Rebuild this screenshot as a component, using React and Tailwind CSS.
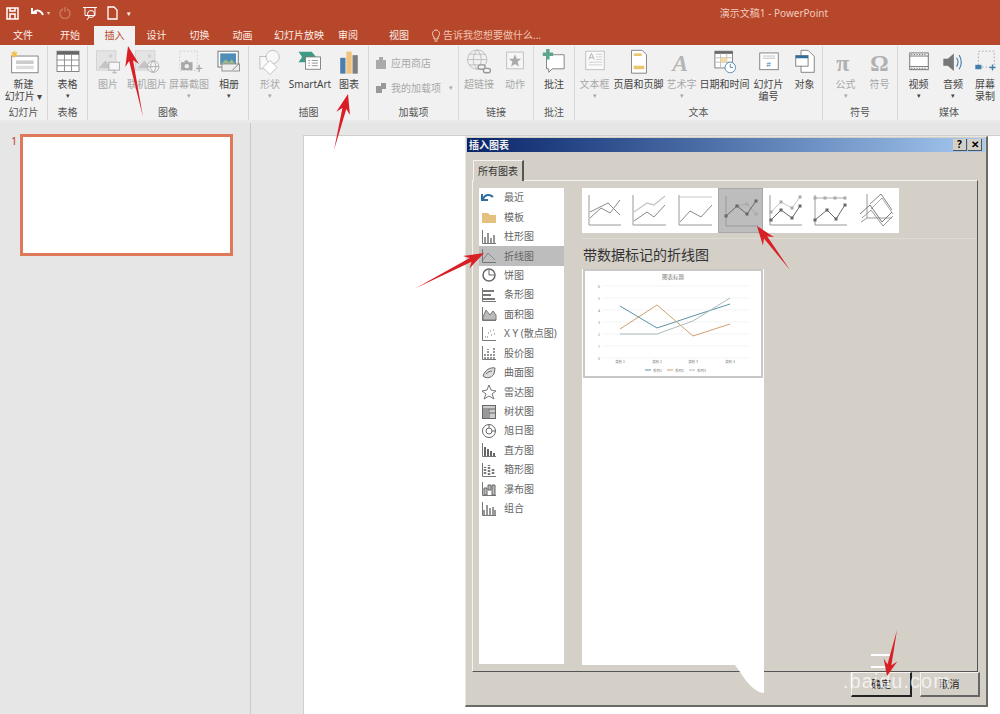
import React from 'react'

const FONT = "font-['Noto_Sans','Noto_Sans_CJK_SC',sans-serif]"

const TABS = [
  ['文件', 'w-[46px]'],
  ['开始', 'w-[48px]'],
  ['插入', 'w-[41px]', true],
  ['设计', 'w-[43px]'],
  ['切换', 'w-[43px]'],
  ['动画', 'w-[43px]'],
  ['幻灯片放映', 'w-[70px]'],
  ['审阅', 'w-[28px]'],
  ['视图', 'w-[38px] ml-[18px]'],
]

const Svg = ({ children, w = 30, h = 30, box }) => (
  <svg width={w} height={h} viewBox={box || `0 0 ${w} ${h}`} fill="none">{children}</svg>
)

const icons = {
  newSlide: (
    <Svg w={36}>
      <rect x="4" y="8" width="30" height="19" fill="#fff" stroke="#777" />
      <rect x="9" y="13" width="20" height="4" fill="#ccc" />
      <rect x="9" y="19" width="20" height="4" fill="#ddd" />
      <path d="M7 1l1 3 3-1-2 3 3 2-4 0-1 3-1-3-4 0 3-2-2-3 3 1z" fill="#f0c050" />
    </Svg>
  ),
  table: (
    <Svg w={28}>
      <rect x="1.500" y="2.500" width="25" height="23" fill="#fff" stroke="#777" />
      <rect x="1.500" y="2.500" width="25" height="4" fill="#666" />
      <path d="M1.500 12.500h25M1.500 19h25M10 6v20M18 6v20" stroke="#888" />
    </Svg>
  ),
  picture: (
    <Svg w={28}>
      <rect x="1" y="2" width="22" height="22" fill="#e4e4e4" stroke="#d0d0d0" />
      <path d="M3 22l8-9 7 9z" fill="#c4c4c4" />
      <circle cx="17" cy="8" r="2" fill="#cfcfcf" />
      <rect x="15" y="15" width="12" height="9" fill="#f6f6f6" stroke="#a8a8a8" />
      <path d="M19 27h5M21 24v3" stroke="#a8a8a8" />
    </Svg>
  ),
  online: (
    <Svg w={30}>
      <rect x="2" y="2" width="22" height="22" fill="#e4e4e4" stroke="#d0d0d0" />
      <path d="M4 22l8-9 7 9z" fill="#c4c4c4" />
      <circle cx="18" cy="8" r="2" fill="#cfcfcf" />
      <circle cx="22" cy="20" r="6.5" fill="#f4f4f4" stroke="#aaa" />
      <path d="M15.5 20h13M22 13.5c-4 4-4 9 0 13M22 13.5c4 4 4 9 0 13" stroke="#aaa" />
    </Svg>
  ),
  screenshot: (
    <Svg w={32}>
      <rect x="5.5" y="2.5" width="20" height="22" stroke="#ccc" strokeDasharray="2 2" />
      <rect x="7" y="15" width="13" height="9" fill="#a8a8a8" />
      <rect x="11" y="13" width="4" height="3" fill="#a8a8a8" />
      <circle cx="13.5" cy="19.5" r="2.5" fill="#eee" />
      <path d="M24 22h7M27.5 18v8" stroke="#aaa" strokeWidth="1.5" />
    </Svg>
  ),
  album: (
    <Svg w={28}>
      <rect x="1.5" y="2.5" width="23" height="18" fill="#fff" stroke="#666" />
      <rect x="4" y="5" width="18" height="13" fill="#4f8fb5" />
      <path d="M4 18l6-6 4 3 3-3 5 6z" fill="#9db98c" />
      <rect x="6" y="17" width="20" height="8" fill="#eee" stroke="#888" />
      <path d="M18 24l7-7" stroke="#777" />
    </Svg>
  ),
  shapes: (
    <Svg w={26}>
      <rect x="1.5" y="8.5" width="14" height="14" stroke="#bbb" fill="#f8f8f8" />
      <circle cx="16" cy="9" r="7.5" stroke="#bbb" fill="#f8f8f8" />
      <path d="M13 13l8 8-8 8-8-8z" stroke="#bbb" fill="#fff" />
    </Svg>
  ),
  smartart: (
    <Svg w={28}>
      <path d="M1 3h15l5 6-5 6H1l4-6z" fill="#3f9a86" />
      <rect x="9" y="9" width="17" height="14" fill="#fff" stroke="#777" />
      <path d="M12 13h2M16 13h7M12 16h2M16 16h7M12 19h2M16 19h7" stroke="#888" />
    </Svg>
  ),
  chart: (
    <Svg w={22}>
      <rect x="1" y="10" width="6" height="18" fill="#4d7fae" />
      <rect x="8" y="3" width="6" height="25" fill="#f0c27a" />
      <rect x="15" y="7" width="6" height="21" fill="#7f7f7f" />
    </Svg>
  ),
  hyperlink: (
    <Svg w={30}>
      <circle cx="13" cy="12" r="11" stroke="#bbb" />
      <path d="M2 12h22M13 1c-6 6-6 16 0 22M13 1c6 6 6 16 0 22M4 6h18M4 18h18" stroke="#bbb" />
      <rect x="14" y="18" width="8" height="5" rx="2.5" stroke="#999" strokeWidth="1.5" fill="#f1f1f1" />
      <rect x="20" y="22" width="8" height="5" rx="2.5" stroke="#999" strokeWidth="1.5" fill="#f1f1f1" />
    </Svg>
  ),
  action: (
    <Svg w={24}>
      <rect x="2.5" y="3.5" width="19" height="19" stroke="#bbb" fill="#f6f6f6" />
      <path d="M12 6l2 5h5l-4 3.5 1.5 5.5-4.500-3-4.500 3L9 14.500 5 11h5z" fill="#aaa" />
    </Svg>
  ),
  comment: (
    <Svg w={26}>
      <path d="M4.500 6.500h20v16H11l-4 4v-4H4.500z" fill="#fff" stroke="#777" />
      <path d="M4 0h4v4h4v4H8v4H4V8H0V4h4z" fill="#5ea58f" />
    </Svg>
  ),
  textbox: (
    <Svg w={26}>
      <rect x="2.500" y="2.500" width="21" height="21" fill="#fafafa" stroke="#bbb" />
      <path d="M6 12l3-7 3 7M7 10h4" stroke="#aaa" />
      <path d="M14 6h7M14 9h7M14 12h7M6 15h15M6 18h15" stroke="#ccc" />
    </Svg>
  ),
  header: (
    <Svg w={20}>
      <path d="M1.500 1.500h12l5 5v21h-17z" fill="#fff" stroke="#777" />
      <rect x="4" y="5" width="9" height="3" fill="#e8c66e" />
      <rect x="4" y="19" width="12" height="4" fill="#e8c66e" />
    </Svg>
  ),
  wordart: (
    <Svg w={26}>
      <text x="2" y="25" fontSize="27" fontStyle="italic" fontWeight="700" fill="#b5b5b5" fontFamily="Liberation Serif">A</text>
    </Svg>
  ),
  datetime: (
    <Svg w={26}>
      <rect x="1.500" y="2.500" width="20" height="19" fill="#fff" stroke="#777" />
      <rect x="1.500" y="2.500" width="20" height="3" fill="#666" />
      <path d="M1.500 10h20M1.500 15h20M8 5v16M15 5v16" stroke="#b8b8b8" />
      <rect x="8" y="10" width="7" height="5" fill="#f4d9a0" />
      <circle cx="19" cy="21" r="6" fill="#fff" stroke="#4d7fae" />
      <path d="M19 17v4h3" stroke="#4d7fae" />
    </Svg>
  ),
  number: (
    <Svg w={26}>
      <rect x="2.500" y="4.500" width="21" height="19" fill="#fff" stroke="#777" />
      <path d="M6 8h14M6 10.500h14" stroke="#bbb" />
      <text x="10" y="20" fontSize="9" fill="#4d7fae" fontStyle="italic" fontFamily="Liberation Sans">#</text>
    </Svg>
  ),
  object: (
    <Svg w={24}>
      <path d="M7.500 1.500h8l7 7v18h-15z" fill="#fff" stroke="#777" />
      <rect x="1.500" y="7.500" width="14" height="12" fill="#fff" stroke="#777" />
      <rect x="1.500" y="7.500" width="14" height="3" fill="#2f6f9f" />
    </Svg>
  ),
  pi: (
    <Svg w={24} h={30}>
      <text x="1" y="25" fontSize="27" fontWeight="700" fill="#b0b0b0" fontFamily="Liberation Serif">π</text>
    </Svg>
  ),
  omega: (
    <Svg w={24} h={30}>
      <text x="1" y="25" fontSize="26" fontWeight="700" fill="#b0b0b0" fontFamily="Liberation Serif">Ω</text>
    </Svg>
  ),
  video: (
    <Svg w={26}>
      <rect x="2.500" y="4.500" width="21" height="19" fill="#fff" stroke="#666" />
      <path d="M2.500 8h21M2.500 20h21" stroke="#666" />
      <path d="M4 6.300h18M4 22h18" stroke="#666" strokeDasharray="1.500 1.500" />
    </Svg>
  ),
  audio: (
    <Svg w={26}>
      <path d="M2 11h5l7-6v20l-7-6H2z" fill="#777" />
      <path d="M17 10c2 3 2 7 0 10M20 7c3 5 3 11 0 16" stroke="#4d7fae" strokeWidth="1.300" />
    </Svg>
  ),
  record: (
    <Svg w={26}>
      <rect x="5.500" y="2.500" width="18" height="18" stroke="#aaa" strokeDasharray="2 2" />
      <rect x="2" y="18" width="7" height="5" fill="#3f7fae" />
      <path d="M18 21h7M21.500 17.500v7" stroke="#3f7fae" strokeWidth="1.500" />
    </Svg>
  ),
}

const GROUPS = [
  { label: '幻灯片', w: 'w-[48px]', items: [{ icon: 'newSlide', lines: ['新建', '幻灯片 ▾'], w: 'w-[47px]' }] },
  { label: '表格', w: 'w-[40px]', items: [{ icon: 'table', lines: ['表格', '▾'], w: 'w-[39px]' }] },
  {
    label: '图像', w: 'w-[161px]', pad: 'pl-[2px]', items: [
      { icon: 'picture', lines: ['图片'], w: 'w-[36px]', off: true },
      { icon: 'online', lines: ['联机图片'], w: 'w-[42px]', off: true },
      { icon: 'screenshot', lines: ['屏幕截图', '▾'], w: 'w-[42px]', off: true },
      { icon: 'album', lines: ['相册', '▾'], w: 'w-[38px]' },
    ],
  },
  {
    label: '插图', w: 'w-[120px]', pad: 'pl-[1px]', items: [
      { icon: 'shapes', lines: ['形状', '▾'], w: 'w-[40px]', off: true },
      { icon: 'smartart', lines: ['SmartArt'], w: 'w-[40px]' },
      { icon: 'chart', lines: ['图表'], w: 'w-[38px]' },
    ],
  },
  { label: '加载项', w: 'w-[90px]', addins: true },
  {
    label: '链接', w: 'w-[75px]', pad: 'pl-[2px]', items: [
      { icon: 'hyperlink', lines: ['超链接'], w: 'w-[36px]', off: true },
      { icon: 'action', lines: ['动作'], w: 'w-[36px]', off: true },
    ],
  },
  { label: '批注', w: 'w-[41px]', items: [{ icon: 'comment', lines: ['批注'], w: 'w-[40px]' }] },
  {
    label: '文本', w: 'w-[248px]', items: [
      { icon: 'textbox', lines: ['文本框', '▾'], w: 'w-[38px]', off: true },
      { icon: 'header', lines: ['页眉和页脚'], w: 'w-[50px]' },
      { icon: 'wordart', lines: ['艺术字', '▾'], w: 'w-[36px]', off: true },
      { icon: 'datetime', lines: ['日期和时间'], w: 'w-[50px]' },
      { icon: 'number', lines: ['幻灯片', '编号'], w: 'w-[38px]' },
      { icon: 'object', lines: ['对象'], w: 'w-[34px]' },
    ],
  },
  {
    label: '符号', w: 'w-[75px]', pad: 'pl-[4px]', items: [
      { icon: 'pi', lines: ['公式', '▾'], w: 'w-[35px]', off: true },
      { icon: 'omega', lines: ['符号'], w: 'w-[33px]', off: true },
    ],
  },
  {
    label: '媒体', w: 'w-[102px]', last: true, pad: 'pl-[3px]', items: [
      { icon: 'video', lines: ['视频', '▾'], w: 'w-[35px]' },
      { icon: 'audio', lines: ['音频', '▾'], w: 'w-[34px]' },
      { icon: 'record', lines: ['屏幕', '录制'], w: 'w-[30px]' },
    ],
  },
]

function RibbonItem({ item }) {
  return (
    <div className={`${item.w} shrink-0 flex flex-col items-center text-[10px] leading-[12px] ${item.off ? 'text-[#a8a8a8]' : 'text-[#444]'}`}>
      <div className="h-[29px] flex items-start justify-center origin-top scale-[0.88]">{icons[item.icon]}</div>
      {item.lines.map((line) => (
        <span key={line} className={`whitespace-nowrap ${line === '▾' ? 'text-[7px]' : ''}`}>{line}</span>
      ))}
    </div>
  )
}

function Addins() {
  return (
    <div className="pl-[7px] pt-[8px] flex flex-col gap-[13px] text-[10px] leading-[12px] text-[#a8a8a8]">
      <div className="flex items-center gap-[5px]">
        <svg width="10" height="12" fill="#aaa"><path d="M0 3h10v9H0zM3 0h4v3H3z" /></svg>
        <span>应用商店</span>
      </div>
      <div className="flex items-center gap-[5px]">
        <svg width="10" height="12" fill="#999"><path d="M0 4h6v7H0zM5 1h5v6H5z" /></svg>
        <span className="whitespace-nowrap">我的加载项</span>
        <span className="text-[7px] ml-[3px]">▾</span>
      </div>
    </div>
  )
}

function Ribbon() {
  return (
    <div className="h-[75px] bg-[#f1f1f1] flex">
      {GROUPS.map((g) => (
        <div key={g.label} className={`${g.w} shrink-0 flex flex-col pt-[3px] mt-[1px] ${g.last ? '' : 'border-r border-[#d8d8d8]'}`}>
          <div className={`flex-1 flex min-h-0 ${g.addins ? 'justify-start' : 'justify-center'} ${g.pad || ''}`}>
            {g.addins ? <Addins /> : g.items.map((it) => <RibbonItem key={it.icon} item={it} />)}
          </div>
          <div className="h-[13px] mb-[1px] text-center text-[10px] leading-[13px] text-[#555]">{g.label}</div>
        </div>
      ))}
    </div>
  )
}

function TitleBar() {
  return (
    <div className="h-[45px] bg-[#b7472a] text-white">
      <div className="h-[26px] flex items-center relative">
        <div className="flex items-center pl-[6px]">
          <svg width="13" height="13" fill="none" stroke="#fff" strokeWidth="1.500"><rect x="1" y="1" width="11" height="11" /><path d="M4 1v3h5V1M4 12V7h5v5" /></svg>
          <svg className="ml-[11px]" width="14" height="12" fill="none" stroke="#fff" strokeWidth="2"><path d="M3 6c3-4 8-3 10 2M2 1v5h5" /></svg>
          <span className="ml-[3px] text-[6px] text-[#f3d5ca]">▾</span>
          <svg className="ml-[9px]" width="12" height="12" fill="none" stroke="#c9765e" strokeWidth="1.500"><path d="M8 2a5 5 0 1 1-4 0M6 0v5" /></svg>
          <svg className="ml-[11px]" width="16" height="15" fill="none" stroke="#fff"><path d="M1 1.500h14M3 1.500v8h10v-8" /><circle cx="9" cy="8" r="3.500" /><path d="M5 14l2-3" /></svg>
          <svg className="ml-[9px]" width="11" height="14" fill="none" stroke="#fff" strokeWidth="1.300"><path d="M1 1h6l3 3v9H1z" /></svg>
          <span className="ml-[9px] text-[7px] leading-none">▾</span>
        </div>
        <span className="ml-auto mr-[172px] text-[10px] text-[#f0cbbd] whitespace-nowrap">演示文稿1 - PowerPoint</span>
      </div>
      <div className="h-[19px] flex items-stretch text-[10px] leading-[19px]">
        {TABS.map(([name, w, active]) => (
          <span key={name} className={`${w} text-center whitespace-nowrap ${active ? 'bg-[#f1f1f1] text-[#b7472a]' : 'text-[#fbeee9]'}`}>{name}</span>
        ))}
        <span className="ml-[14px] flex items-center gap-[3px] text-[#f0c4b4]">
          <svg width="8" height="13" fill="none" stroke="#f6d8cd"><path d="M2 8c-3-3-1-7 2-7s5 4 2 7v2H2zM2.500 12h3" /></svg>
          <span className="whitespace-nowrap">告诉我您想要做什么...</span>
        </span>
      </div>
    </div>
  )
}

const S = '#8a8a8a'
const L = '#c8c8c8'
const Line = ({ p, c = S, w = 1 }) => <polyline points={p} stroke={c} strokeWidth={w} fill="none" />
const Dots = ({ p, c = '#666', s = 3 }) =>
  p.split(' ').map((q) => {
    const [x, y] = q.split(',').map(Number)
    return <rect key={q} x={x - s / 2} y={y - s / 2} width={s} height={s} fill={c} />
  })
const Axes = ({ x = 7 }) => <path d={`M${x} 7V37H39`} stroke="#999" fill="none" />

const STRIP = [
  <><Axes /><Line p="8,30 19,20 28,25 38,12" /><Line p="8,24 26,15 38,27" /></>,
  <><Axes x={6} /><Line p="7,24 20,15 27,17 38,8" c={L} w={1.500} /><Line p="7,33 20,24 27,29 38,17" /></>,
  <><Axes x={6} /><Line p="6,9 39,9" c={L} /><Line p="7,34 17,23 28,29 39,17" /></>,
  <><Axes /><Line p="18,17 28,15 37,25" c="#aaa" /><Dots p="28,15 37,25" c="#aaa" /><Line p="7,27 18,17 28,25 37,12" c="#666" /><Dots p="7,27 18,17 28,25 37,12" /></>,
  <><Axes /><Line p="8,24 18,14 29,20 37,9" c={L} /><Dots p="8,24 18,14 29,20 37,9" c="#aaa" /><Line p="8,32 18,22 29,30 37,18" c="#666" /><Dots p="8,32 18,22 29,30 37,18" /></>,
  <><Axes /><Line p="7,10 37,10" c="#aaa" /><Dots p="7,10 17,10 27,10 37,10" c="#aaa" /><Line p="7,32 19,22 28,31 37,17" c="#666" /><Dots p="7,32 19,22 28,31 37,17" /></>,
  <><path d="M13 6V30L7 34M13 30H38" stroke="#999" fill="none" /><Line p="6,26 16,17 28,34 38,24" c="#777" /><Line p="8,30 17,22 29,38 39,28" c="#999" /><Line p="16,16 27,6 38,22" c="#888" /><Line p="17,21 28,10 39,26" c="#aaa" /></>,
]

const CHART_TYPES = [
  '最近', '模板', '柱形图', '折线图', '饼图', '条形图', '面积图', 'X Y (散点图)', '股价图',
  '曲面图', '雷达图', '树状图', '旭日图', '直方图', '箱形图', '瀑布图', '组合',
]

function TypeIcon({ i }) {
  const base = <path d="M1.500 1v13.500H15" stroke="#777" fill="none" />
  const all = [
    <path d="M2 9c2-5 7-5 10-2M1 4v6h6" stroke="#2f6f9f" strokeWidth="2" fill="none" />,
    <path d="M1 4h6l2 2h6v8H1z" fill="#e5bf7f" />,
    <>{base}<path d="M4 14V8M7 14V4M10 14V9M13 14V6" stroke="#777" strokeWidth="1.500" /></>,
    <>{base}<path d="M2 12l5-7 4 4 3 3" stroke="#888" fill="none" /></>,
    <><circle cx="8" cy="8" r="6" stroke="#666" strokeWidth="1.500" fill="none" /><path d="M8 3v5h5" stroke="#666" fill="none" /></>,
    <>{base}<path d="M2 4h11M2 8h8M2 12h12" stroke="#777" strokeWidth="1.800" /></>,
    <>{base}<path d="M2 11l3-7 4 5 3-4 3 4v5H2z" fill="#bbb" stroke="#777" /></>,
    <>{base}<path d="M4 11h1M7 7h1M10 9h1M12 4h1M6 11h1M9 5h1M13 8h1" stroke="#777" strokeDasharray="1 1" /></>,
    <>{base}<path d="M4 14V8M7 14V4M10 14V9M13 14V2" stroke="#777" strokeDasharray="2 1" strokeWidth="1.500" /></>,
    <><path d="M2 11c2-6 7-9 12-8l-1 6c-3 4-7 5-11 2z" stroke="#666" fill="#ddd" /><path d="M5 9c2-2 4-3 6-3" stroke="#666" fill="none" /></>,
    <path d="M8 1l2 5 5 1-4 3 2 5-5-3-5 3 2-5-4-3 5-1z" stroke="#777" fill="none" />,
    <><rect x="1.500" y="1.500" width="13" height="13" stroke="#666" fill="#ccc" /><path d="M1.500 5h13M8 5v10M8 9h6" stroke="#666" /><rect x="2" y="6" width="6" height="8" fill="#999" /></>,
    <><circle cx="8" cy="8" r="6.500" stroke="#666" fill="none" /><circle cx="8" cy="8" r="3" stroke="#666" fill="none" /><path d="M8 1.500v3.500M11 8h3.500" stroke="#666" /></>,
    <>{base}<path d="M4 14V5M7 14V7M10 14V9M13 14V11" stroke="#666" strokeWidth="2" /></>,
    <>{base}<path d="M4 12V5M8 13V3M12 12V6" stroke="#777" strokeWidth="2.500" strokeDasharray="2 1" /></>,
    <>{base}<path d="M3 7h3v7H3zM7 4h3v5H7zM11 4h3v10h-3z" stroke="#666" fill="#bbb" /></>,
    <>{base}<path d="M3 14V9M6 14V4M9 14V7M12 14V6M14 14V9" stroke="#777" strokeWidth="1.500" /></>,
  ]
  return <svg width="16" height="16" viewBox="0 0 16 16">{all[i]}</svg>
}

function PreviewChart() {
  const xs = [620, 657, 693, 730]
  const pts = (ys) => ys.map((y, i) => `${xs[i]},${y}`).join(' ')
  return (
    <svg width="176" height="105" viewBox="585 270 176 105" className="block">
      <text x="673" y="278" fontSize="5.500" fill="#777" textAnchor="middle" fontFamily="Noto Sans CJK SC">图表标题</text>
      {[285, 297, 309, 321, 333, 345, 357].map((y, i) => (
        <g key={y}>
          <line x1="603" x2="748" y1={y} y2={y} stroke="#ececec" strokeWidth="0.600" />
          <text x="598" y={y + 1.500} fontSize="3.500" fill="#888">{6 - i}</text>
        </g>
      ))}
      <polyline points={pts([305, 327, 315, 303])} stroke="#5b93a8" fill="none" />
      <polyline points={pts([328, 304, 335, 323])} stroke="#d0a070" fill="none" />
      <polyline points={pts([333, 333, 320, 297])} stroke="#a9bcbc" fill="none" />
      {xs.map((x, i) => (
        <text key={x} x={x} y="362" fontSize="3.500" fill="#777" textAnchor="middle" fontFamily="Noto Sans CJK SC">类别 {i + 1}</text>
      ))}
      {[['#5b93a8', 645, '系列1'], ['#d0a070', 667, '系列2'], ['#a9bcbc', 689, '系列3']].map(([c, x, t]) => (
        <g key={t}>
          <line x1={x} x2={x + 6} y1="369" y2="369" stroke={c} />
          <text x={x + 8} y="370.500" fontSize="3.500" fill="#777" fontFamily="Noto Sans CJK SC">{t}</text>
        </g>
      ))}
    </svg>
  )
}

function Dialog() {
  return (
    <div className={`absolute left-[465px] top-[136px] w-[523px] h-[571px] bg-[#d4d0c8] border-r-2 border-b-2 border-[#6a6a66] border-l border-t border-l-[#e8e6e0] border-t-[#e8e6e0] flex flex-col ${FONT}`}>
      <div className="mx-[1px] mt-[1px] h-[14px] shrink-0 bg-gradient-to-r from-[#0a246a] to-[#a6caf0] flex items-center pl-[2px] pr-[3px]">
        <span className="text-[10px] leading-[14px] font-bold text-[#f2f2f2]">插入图表</span>
        <button className="ml-auto w-[14px] h-[12px] bg-[#d4d0c8] border-r border-b border-[#555] text-[10px] font-bold leading-[11px] text-black">?</button>
        <button className="ml-[1px] w-[14px] h-[12px] bg-[#d4d0c8] border-r border-b border-[#555] text-[10px] font-bold leading-[11px] text-black">✕</button>
      </div>
      <div className="ml-[7px] mt-[8px] w-[51px] h-[21px] shrink-0 border-l border-t border-[#f4f3ef] border-r-2 border-r-[#555] text-[10px] leading-[20px] text-center text-[#333] z-10 -mb-[1px] bg-[#d4d0c8]">所有图表</div>
      <div className="ml-[6px] w-[506px] h-[492px] shrink-0 border-t border-l border-[#f4f3ef] border-r border-r-[#555] border-b border-b-[#555] flex pt-[7px] pl-[6px]">
        <div className="w-[85px] h-[476px] shrink-0 bg-white">
          {CHART_TYPES.map((t, i) => (
            <div key={t} className={`h-[19.440px] flex items-center pl-[2px] text-[10px] text-[#666] whitespace-nowrap ${t === '折线图' ? 'bg-[#bdbdbd]' : ''}`}>
              <span className="w-[23px] flex justify-start shrink-0"><TypeIcon i={i} /></span>
              {t}
            </div>
          ))}
        </div>
        <div className="ml-[18px] w-[395px] relative">
          <div className="flex w-[317px] h-[45px] bg-white">
            {STRIP.map((icon, i) => (
              <div key={i} className={`w-[45.300px] h-[45px] shrink-0 ${i === 3 ? 'bg-[#bdbdbd] border border-[#a8a8a8]' : ''}`}>
                <svg width="45" height="45" viewBox="0 0 45 45">{icon}</svg>
              </div>
            ))}
          </div>
          <div className="border-t border-[#dedbd4] mt-[5px] w-[395px]" />
          <h2 className="mt-[6px] text-[14px] leading-[20px] text-[#333] pl-[1px]">带数据标记的折线图</h2>
          <div className="mt-[4px] w-[182px] h-[396px] bg-white">
            <div className="w-[180px] h-[109px] ml-[1px] border-2 border-[#c8c8c6] bg-white overflow-hidden"><PreviewChart /></div>
          </div>
          {/* page curl at the bottom of the white column */}
          <svg className="absolute left-[152px] top-[476px]" width="30" height="30" viewBox="0 0 30 30">
            <path d="M0 0H30V29C16 27 10 12 0 0z" fill="#fff" />
          </svg>
        </div>
      </div>
      <div className="absolute left-[385px] top-[535px] flex gap-[8px] text-[10px] text-[#222]">
        <button className="w-[61px] h-[25px] border-t border-l border-[#f4f3ef] border-r-2 border-b-2 border-r-[#222] border-b-[#222]">确定</button>
        <button className="w-[60px] h-[25px] border-t border-l border-[#f4f3ef] border-r-2 border-b-2 border-r-[#666] border-b-[#666]">取消</button>
      </div>
      <span className="absolute left-[377px] top-[532px] text-[20px] leading-[24px] tracking-[1px] text-white/70 font-['Liberation_Sans',sans-serif] whitespace-nowrap">.baidu.com</span>
      <div className="absolute left-[405px] top-[517px] w-[20px] h-[14px] border-t-2 border-b-2 border-white" />
    </div>
  )
}

function Arrow({ from, to }) {
  const [x1, y1] = from
  const [x2, y2] = to
  const len = Math.hypot(x2 - x1, y2 - y1)
  const ux = (x2 - x1) / len
  const uy = (y2 - y1) / len
  const nx = -uy
  const ny = ux
  const head = Math.min(20, len * 0.35)
  const bx = x2 - ux * head
  const by = y2 - uy * head
  const nb = bx + ux * 5
  const nc = by + uy * 5
  const pts = [
    [x1, y1],
    [nb + nx * 2, nc + ny * 2],
    [bx + nx * 7, by + ny * 7],
    [x2, y2],
    [bx - nx * 7, by - ny * 7],
    [nb - nx * 2, nc - ny * 2],
  ]
  return <polygon points={pts.map((p) => p.join(',')).join(' ')} fill="#d91f26" />
}

export default function App() {
  return (
    <div className={`relative w-[1000px] h-[714px] overflow-hidden bg-[#e6e6e6] ${FONT}`}>
      <TitleBar />
      <Ribbon />
      <div className="h-[594px] flex border-t-[3px] border-[#e9e9e9]">
        <div className="w-[251px] shrink-0 border-r border-[#c9c9c9] flex pt-[11px] pl-[11px]">
          <span className="w-[9px] text-[11px] leading-[14px] text-[#b7472a]">1</span>
          <div className="w-[213px] h-[122px] bg-white border-[3px] border-[#e0795a]" />
        </div>
        <div className="flex-1 pl-[52px] pt-[12px]">
          <div className="h-full bg-white border-l border-t border-[#cfcfcf]" />
        </div>
      </div>
      <Dialog />
      {/* callout arrows drawn over the screenshot */}
      <svg className="absolute inset-0" width="1000" height="714">
        <Arrow from={[143, 117]} to={[128, 46]} />
        <Arrow from={[334, 150]} to={[348, 94]} />
        <Arrow from={[416, 288]} to={[484, 253]} />
        <Arrow from={[790, 270]} to={[757, 226]} />
        <Arrow from={[897, 630]} to={[887, 676]} />
      </svg>
    </div>
  )
}
